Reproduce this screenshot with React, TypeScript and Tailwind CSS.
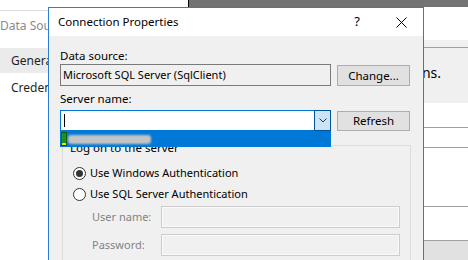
import React from "react";

const font = "font-['Noto_Sans',sans-serif]";

function Radio({ checked, label }: { checked?: boolean; label: string }) {
  return (
    <div className="flex h-[16px] items-center gap-[4px]">
      <div className="flex h-[13px] w-[13px] items-center justify-center rounded-full border border-[#333333] bg-white">
        {checked && <div className="h-[7px] w-[7px] rounded-full bg-[#333333]" />}
      </div>
      <span className="text-[11px] leading-[16px] text-black">{label}</span>
    </div>
  );
}

function Btn({ label, h }: { label: string; h: string }) {
  return (
    <div
      className={`flex w-[73px] items-center justify-center border border-[#adadad] bg-[#e1e1e1] text-[11.5px] leading-[16px] text-black ${h}`}
    >
      {label}
    </div>
  );
}

export default function App() {
  return (
    <div className={`relative h-[260px] w-[468px] overflow-hidden bg-white ${font}`}>
      {/* parent window top strip */}
      <div className="flex h-[7px]">
        <div className="w-[188px] bg-white" />
        <div className="w-px bg-black" />
        <div className="flex-1 bg-[#737373]" />
      </div>
      <div className="flex h-[253px]">
        {/* left column of parent */}
        <div className="flex w-[190px] flex-col">
          <div className="h-[3px]" />
          <div className="border-t border-[#dedede]" />
          <div className="flex h-[30px] w-[48px] items-center overflow-hidden whitespace-nowrap text-[12px] text-[#8a8a8a]">
            Data Source Properties
          </div>
          <div className="mt-[7px] flex h-[25px] items-center bg-[#ebebeb] pl-[11px] text-[12px] text-[#1e1e1e]">
            <span className="w-[37px] overflow-hidden whitespace-nowrap">General</span>
          </div>
          <div className="flex h-[30px] items-center pl-[11px] text-[12px] text-[#1e1e1e]">
            <span className="w-[37px] overflow-hidden whitespace-nowrap">Credentials</span>
          </div>
        </div>
        {/* right column of parent */}
        <div className="flex flex-1 flex-col">
          <div className="h-[33px] bg-white" />
          <div className="h-[7px] bg-[#f0f0f0]" />
          <div className="h-px bg-[#a0a0a0]" />
          <div className="flex h-[55px] justify-end bg-[#f0f0f0] pr-[27px] pt-[17px]">
            <div className="flex h-[16px] w-[17px] justify-end overflow-hidden">
              <span className="whitespace-nowrap text-[14px] leading-[16px] text-black">
                Specify the connection options.
              </span>
            </div>
          </div>
          <div className="h-[24px] bg-white" />
          <div className="h-px bg-[#a0a0a0]" />
          <div className="h-[19px] bg-white" />
          <div className="h-px bg-[#a0a0a0]" />
          <div className="h-[58px] bg-white" />
          <div className="h-px bg-[#a0a0a0]" />
          <div className="h-[33px] bg-white" />
          <div className="h-px bg-[#a0a0a0]" />
          <div className="flex-1 bg-[#e1e1e1]" />
        </div>
      </div>

      {/* dialog */}
      <div className="absolute left-[48px] top-[7px] flex h-[270px] w-[376px] flex-col border border-[#2a7fd4] bg-[#f0f0f0]">
        <div className="flex h-[30px] items-center bg-white">
          <div className="flex-1 pl-[9px] text-[11.5px] text-black">Connection Properties</div>
          <div className="flex h-full w-[44px] items-center justify-center text-[13px] text-black">?</div>
          <div className="flex h-full w-[44px] items-center justify-center">
            <svg width="11" height="11" viewBox="0 0 11 11">
              <path d="M0.5 0.5 L10.5 10.5 M10.5 0.5 L0.5 10.5" stroke="#000" strokeWidth="1" fill="none" />
            </svg>
          </div>
        </div>
        <div className="flex flex-col pl-[11px] pt-[12px] text-[11px] text-black">
          <div className="h-[16px] text-[11.5px] leading-[16px]">Data source:</div>
          <div className="flex items-start gap-[6px]">
            <div className="flex h-[22px] w-[271px] items-center border border-[#7a7a7a] bg-[#f0f0f0] pl-[2px] leading-[16px] whitespace-nowrap">
              Microsoft SQL Server (SqlClient)
            </div>
            <div className="mt-[1px]">
              <Btn label="Change..." h="h-[21px]" />
            </div>
          </div>
          <div className="mt-[5px] h-[16px] text-[11.5px] leading-[16px]">Server name:</div>
          <div className="mt-[3px] flex items-start gap-[6px]">
            <div className="relative flex h-[21px] w-[271px]">
              <div className="flex flex-1 items-center border-y border-l border-[#0078d7] bg-white pl-[3px]">
                <div className="h-[13px] w-px bg-black" />
              </div>
              <div className="flex w-[17px] items-center justify-center border border-[#005499] bg-[#cce4f7]">
                <svg width="8" height="5" viewBox="0 0 8 5">
                  <path d="M0.5 0.5 L4 4 L7.5 0.5" stroke="#333" strokeWidth="1" fill="none" />
                </svg>
              </div>
              {/* dropdown list */}
              <div className="absolute left-0 top-full z-10 flex h-[16px] w-[271px] items-center bg-[#0078d7]">
                <div className="ml-[1px] flex h-[14px] w-[6px] flex-col border border-[#0a5c0a] bg-[#1f8f1f]">
                  <div className="flex-1" />
                  <div className="h-[2px] bg-[#f2e600]" />
                </div>
                <div className="ml-[1px] h-[9px] w-[83px] rounded-[3px] bg-[#c4c4c4] blur-[1px]" />
              </div>
            </div>
            <div className="mt-[1px]">
              <Btn label="Refresh" h="h-[20px]" />
            </div>
          </div>
          {/* group box */}
          <div className="relative ml-[2px] mt-[14px] w-[349px] border border-b-0 border-[#dcdcdc] pb-[20px] pl-[10px] pt-[19px]">
            <div className="absolute left-[6px] top-[-6px] bg-[#f0f0f0] px-[1px] text-[11.5px] leading-[16px]">
              Log on to the server
            </div>
            <Radio checked label="Use Windows Authentication" />
            <div className="mt-[5px]">
              <Radio label="Use SQL Server Authentication" />
            </div>
            <div className="mt-[4px] flex items-center pl-[19px]">
              <div className="w-[69px] leading-[16px] text-[#838383]">User name:</div>
              <div className="h-[22px] w-[239px] border border-[#cccccc] bg-[#f0f0f0] shadow-[inset_0_0_0_1px_#fafafa]" />
            </div>
            <div className="mt-[6px] flex items-center pl-[19px]">
              <div className="w-[69px] leading-[16px] text-[#838383]">Password:</div>
              <div className="h-[22px] w-[239px] border border-[#cccccc] bg-[#f0f0f0] shadow-[inset_0_0_0_1px_#fafafa]" />
            </div>
          </div>
        </div>
      </div>
    </div>
  );
}
